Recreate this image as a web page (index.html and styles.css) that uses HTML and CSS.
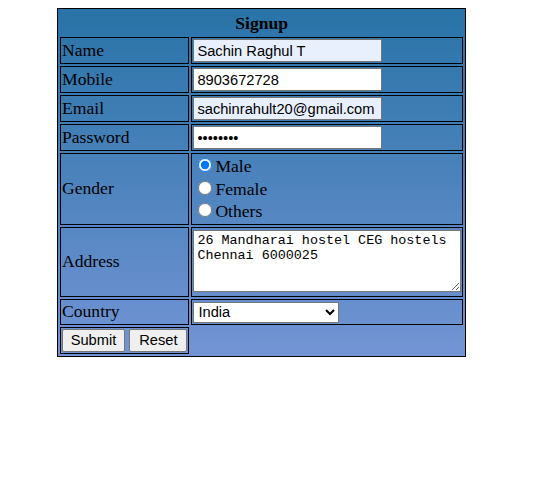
FILE: index.html
```html
<!DOCTYPE html>
<html>
<head>
<meta charset="utf-8">
<title>Signup</title>
<link rel="stylesheet" href="styles.css">
</head>
<body>
<form class="form">
<table class="signup">
  <tr><th class="title" colspan="2">Signup</th></tr>
  <tr>
    <td class="label">Name</td>
    <td class="field"><input class="text autofill" type="text" value="Sachin Raghul T"></td>
  </tr>
  <tr>
    <td class="label">Mobile</td>
    <td class="field"><input class="text" type="text" value="8903672728"></td>
  </tr>
  <tr>
    <td class="label">Email</td>
    <td class="field"><input class="text autofill" type="text" value="sachinrahult20@gmail.com"></td>
  </tr>
  <tr>
    <td class="label">Password</td>
    <td class="field"><input class="text" type="password" value="12345678"></td>
  </tr>
  <tr>
    <td class="label">Gender</td>
    <td class="field gender"><input class="radio" type="radio" name="g" checked>Male<br><input class="radio" type="radio" name="g">Female<br><input class="radio" type="radio" name="g">Others</td>
  </tr>
  <tr>
    <td class="label">Address</td>
    <td class="field"><textarea class="area" spellcheck="false">26 Mandharai hostel CEG hostels Chennai 6000025</textarea></td>
  </tr>
  <tr>
    <td class="label">Country</td>
    <td class="field"><select class="sel"><option>India</option></select></td>
  </tr>
  <tr>
    <td class="label buttons"><button class="btn btn-submit" type="button">Submit</button> <button class="btn btn-reset" type="button">Reset</button></td>
  </tr>
</table>
</form>
</body>
</html>
```
FILE: styles.css
```css
html, body {
  background: #fff;
}
body {
  margin: 8px;
  font-family: "Liberation Serif", "Times New Roman", serif;
  font-size: 17.6px;
  color: #000;
}
.form {
  margin: 0;
}
.signup {
  margin-left: 49px;
  width: 409px;
  border: 1px solid #000;
  border-spacing: 2px;
  background: linear-gradient(#2873a7, #7394d4);
}
.title {
  padding: 2px 1px 2px;
  font-size: 17.6px;
  font-weight: bold;
  text-align: center;
  border: none;
  line-height: 20px;
}
.signup td {
  border: 1px solid #000;
  padding: 1px;
}
.label {
  box-sizing: border-box;
  width: 129px;
}
.field {
  box-sizing: border-box;
  width: 272px;
}
.gender {
  line-height: 22.6px;
}
.text {
  box-sizing: border-box;
  width: 189px;
  height: 23px;
  margin: 0;
  font-family: "Liberation Sans", Arial, sans-serif;
  font-size: 14.67px;
  padding: 1px 3px;
  border: 1px solid #767676;
  background: #fff;
}
.autofill {
  background: #e8f0fe;
}
.radio {
  margin: 3px 3px 0 5px;
  width: 14px;
  height: 14px;
}
.area {
  display: block;
  box-sizing: border-box;
  width: 268px;
  height: 62px;
  margin: 1px 0 3px;
  font-family: "Liberation Mono", "Courier New", monospace;
  font-size: 13.4px;
  padding: 2px 3px;
  border: 1px solid #767676;
  resize: both;
}
.sel {
  display: block;
  box-sizing: border-box;
  width: 146px;
  height: 21px;
  margin: 1px 0 0;
  font-family: "Liberation Sans", Arial, sans-serif;
  font-size: 14.67px;
  border: 1px solid #767676;
  background: #fff;
}
.buttons {
  padding: 1px 1px 1px 2px;
  white-space: nowrap;
}
.btn {
  font-family: "Liberation Sans", Arial, sans-serif;
  font-size: 14.67px;
  padding: 1px 0;
  margin: 0;
  height: 23px;
  text-align: center;
  background: #efefef;
  border: 1px solid #767676;
  border-radius: 2px;
}
.btn-submit {
  width: 63px;
}
.btn-reset {
  width: 58px;
}
```
